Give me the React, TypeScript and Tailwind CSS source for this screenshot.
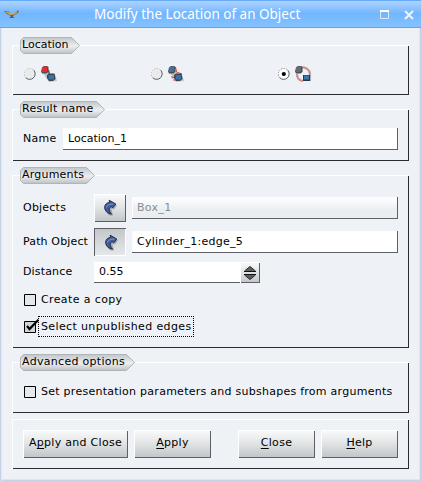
import React from "react";

const raised =
  "shadow-[inset_1px_1px_#ffffff,inset_-1px_-1px_#5c5f63] bg-linear-to-b from-[#fafbfb] via-[#e0e3e4] to-[#bfc4c7]";
const sunken = "shadow-[inset_-1px_-1px_#5c5f63,inset_1px_1px_#fcfdff]";

function Group({
  title,
  tagWidth,
  spacing,
  className,
  children,
}: {
  title?: string;
  tagWidth?: number;
  spacing?: string;
  className: string;
  children: React.ReactNode;
}) {
  return (
    <section
      className={`flex flex-col shadow-[inset_1px_1px_#ffffff,inset_-1px_-1px_#2b2b2f] ${className}`}
    >
      {title && tagWidth && (
        <div className="-mt-2 ml-2 grid h-[17px] shrink-0 justify-start">
          <svg
            className="col-start-1 row-start-1"
            width={tagWidth}
            height="17"
            viewBox={`0 0 ${tagWidth} 17`}
          >
            <defs>
              <linearGradient id="tag" x1="0" y1="0" x2="0" y2="1">
                <stop offset="0" stopColor="#c3c7ca" />
                <stop offset="0.55" stopColor="#eceef0" />
                <stop offset="1" stopColor="#bcc1c4" />
              </linearGradient>
            </defs>
            <path
              d={`M3.5 .5H${tagWidth - 8.5}L${tagWidth - 0.5} 8.5L${tagWidth - 8.5} 16.5H3.5L.5 13.5V3.5Z`}
              fill="url(#tag)"
              stroke="#b0b5b8"
            />
          </svg>
          <span className={`col-start-1 row-start-1 pl-[2px] leading-[15px] ${spacing}`}>
            {title}
          </span>
        </div>
      )}
      {children}
    </section>
  );
}

function Radio({ checked }: { checked?: boolean }) {
  return (
    <svg className="-mt-px" width="12" height="12" viewBox="0 0 12 12">
      <circle cx="5.8" cy="6" r="5.5" fill={checked ? "#ffffff" : "#e9ebec"} stroke="#ffffff" />
      <path d="M1.6 9.6A5.5 5.5 0 0 0 9.7 2.1" fill="none" stroke="#55585b" />
      <path
        d="M1.9 9.9A5.5 5.5 0 1 1 9.7 2.1"
        fill="none"
        stroke={checked ? "#8b8e91" : "#b4b7b9"}
        strokeDasharray="1.5 1"
      />
      {checked && <circle cx="5.8" cy="6" r="2.1" fill="#000" />}
    </svg>
  );
}

function Solid({ color }: { color: string }) {
  return (
    <g>
      <path d="M1 1.5L3 0H6L7.5 1V6L5.5 7.5H1L0 5.5Z" fill="#4b4f53" />
      <path d="M1 2L2.5 .5H6V5L5 6H1Z" fill={color} />
    </g>
  );
}

function MoveIcon({ kind }: { kind: "translate" | "points" | "path" }) {
  return (
    <svg width="17" height="17" viewBox="0 0 17 17">
      {kind === "path" ? (
        <>
          <path
            d="M6 1.5C10 1 14 3 15 7V15M2 8C2 12 4 14.5 8 15"
            fill="none"
            stroke="#b9b3b5"
            strokeWidth="2.2"
          />
          <path
            d="M6 1.5C10 1 14 3 14.5 7V14M2 8C2 12 4 14.5 8 15"
            fill="none"
            stroke="#e08080"
            strokeWidth="1.3"
          />
          <Solid color="#666b70" />
          <path d="M8 9h7v6H8z" fill="#24384c" />
          <path d="M9 9.5h5v4H9z" fill="#3d77ae" />
        </>
      ) : (
        <>
          <path d="M2 7H7L9 3V8H14L16 15L8 16L5 12Z" fill="#c3c5c8" />
          {kind === "points" ? (
            <path d="M7.5 1L8.5 6L14 8M4 10V12L7 11M5 14H8" fill="none" stroke="#e14545" />
          ) : (
            <path d="M7 4L8.5 8" stroke="#6a6563" strokeWidth="1.5" />
          )}
          <Solid color={kind === "translate" ? "#e32c35" : "#3d72a8"} />
          <path d="M6 9L8 7.5H13.5L14.5 13L12 15H8L6 12Z" fill="#3b434a" />
          <path d="M7.5 9h5.5v4.5H7.5z" fill="#3673ae" />
        </>
      )}
    </svg>
  );
}

function Option({
  kind,
  checked,
}: {
  kind: "translate" | "points" | "path";
  checked?: boolean;
}) {
  return (
    <div className="flex w-[127px] items-center gap-[5px]">
      <Radio checked={checked} />
      <MoveIcon kind={kind} />
    </div>
  );
}

function PickButton({ pressed }: { pressed?: boolean }) {
  return (
    <button
      className={`flex h-7 w-8 shrink-0 items-center justify-center ${
        pressed
          ? "bg-linear-to-b from-[#c2c6c9] to-[#e6e9eb] pt-px pl-px shadow-[inset_1px_1px_#5c5f63,inset_-1px_-1px_#ffffff]"
          : raised
      }`}
    >
      <svg width="16" height="18" viewBox="0 0 16 18">
        <path d="M3 9L9 3L15 6.5L12 10.5L9.5 10L11 16.5L7 16.5L3 12Z" fill="#7d8287" opacity=".55" />
        <path
          d="M7.2 1.2L13.8 5L10.6 9L9.6 7.6C7.6 8 6.8 9.5 7.4 11.5C7.8 13 8.6 14 9.6 15.2C6 14.6 2.4 11.6 2.6 8.2C2.8 5.4 4.8 3.6 7.6 3.4Z"
          fill="#405aa5"
          stroke="#20242f"
          strokeWidth=".9"
        />
        <path d="M4.2 8.5C5 6 8 5 11.5 5" fill="none" stroke="#7f98d6" />
      </svg>
    </button>
  );
}

function Check({ checked }: { checked?: boolean }) {
  return (
    <svg className="shrink-0" width="15" height="14" viewBox="0 0 15 14">
      <path d="M.5 2.5h11v11H.5z" fill={checked ? "#d0d4d6" : "#e5e8ea"} stroke="#000" />
      {checked && <path d="M3 7L5.5 10L14.5 .7" fill="none" stroke="#000" strokeWidth="2.2" />}
    </svg>
  );
}

function PushButton({ className, children }: { className: string; children: React.ReactNode }) {
  return (
    <button
      className={`h-7 pb-[2px] text-center leading-[26px] tracking-[0.28px] ${raised} ${className}`}
    >
      {children}
    </button>
  );
}

const underline = "underline decoration-1 underline-offset-2";

export default function App() {
  return (
    <div className="flex h-[481px] w-[421px] flex-col bg-[#eef1f6] font-['DejaVu_Sans',sans-serif] text-[11px] whitespace-nowrap text-black">
      <header className="flex h-7 shrink-0 items-center border-b border-[#5ea4e8] bg-linear-to-b from-[#b2d5ff] via-[#72b6ff] to-[#84c3ff] pr-[7px] pl-1 shadow-[inset_0_1px_#65aafa]">
        <svg width="16" height="10" viewBox="0 0 16 10">
          <path d="M0 2L4 2L7 5L10 4L15 1L14 4L10 6L9 8L11 9H5L7 7L3 5Z" fill="#67604f" />
          <path d="M2 2.5L6 5H9L13 3" fill="none" stroke="#e6b33c" strokeWidth="1.3" />
        </svg>
        <h1 className="flex-1 pl-[74px] font-['Noto_Sans',sans-serif] text-[13.5px] leading-5 text-white">
          Modify the Location of an Object
        </h1>
        <svg className="mt-[2px]" width="34" height="10" viewBox="0 0 34 10">
          <path d="M.5 1V8.5H8.5V1" fill="none" stroke="#dceaf8" />
          <path d="M0 1h9" stroke="#fff" strokeWidth="2" />
          <path d="M25 1L33 9M33 1L25 9" stroke="#eef5fc" strokeWidth="2" />
        </svg>
      </header>
      <main className="flex flex-1 flex-col pt-[17px] pr-3 pl-3 shadow-[inset_1px_0_#c3d2e5,inset_2px_0_#dfe7f1,inset_-1px_-1px_#c3d2e5,inset_-2px_-2px_#dce6f0]">
        <Group title="Location" tagWidth={60} spacing="tracking-normal" className="h-[50px]">
          <div className="mt-[12px] flex h-[17px] pl-[12px]">
            <Option kind="translate" />
            <Option kind="points" />
            <Option kind="path" checked />
          </div>
        </Group>

        <Group title="Result name" tagWidth={85} spacing="tracking-[0.25px]" className="mt-[14px] h-[52px]">
          <div className="mt-[10px] flex h-[22px] pr-[11px] pl-[11px]">
            <label className="w-10 leading-[21px] tracking-[0.25px]">Name</label>
            <div className={`flex-1 bg-white pl-[5px] leading-[21px] ${sunken}`}>Location_1</div>
          </div>
        </Group>

        <Group title="Arguments" tagWidth={75} spacing="tracking-[0.22px]" className="mt-[14px] h-[173px]">
          <div className="mt-[10px] flex h-7 items-center px-[11px]">
            <label className="w-[71px] tracking-[0.22px]">Objects</label>
            <PickButton />
            <div
              className={`ml-[6px] h-[22px] flex-1 bg-linear-to-b from-white to-[#eaeef1] to-60% pl-[5px] leading-[21px] tracking-[0.3px] text-[#8a8d90] ${sunken}`}
            >
              Box_1
            </div>
          </div>
          <div className="mt-[6px] flex h-7 items-center px-[11px]">
            <label className="w-[71px] tracking-[0.14px]">Path Object</label>
            <PickButton pressed />
            <div
              className={`ml-[6px] h-[22px] flex-1 bg-white pl-[5px] leading-[21px] tracking-[0.25px] ${sunken}`}
            >
              Cylinder_1:edge_5
            </div>
          </div>
          <div className="mt-[6px] flex h-[21px] px-[11px]">
            <label className="w-[71px] leading-[19px] tracking-[0.15px]">Distance</label>
            <div className="w-[146px] bg-white pl-[5px] leading-[19px] shadow-[inset_0_-1px_#5c5f63]">
              0.55
            </div>
            <div className={`flex w-5 items-center justify-center ${raised}`}>
              <svg width="12" height="14" viewBox="0 0 12 14">
                <path d="M.5 5.5L6 .5L11.5 5.5ZM.5 8.5L6 13.5L11.5 8.5Z" fill="#5c5f62" />
                <path d="M0 5.5H12M0 8.5H12" stroke="#111" />
                <path d="M.5 5L6 .5L11.5 5M.5 9L6 13.5L11.5 9" fill="none" stroke="#222" />
              </svg>
            </div>
          </div>
          <div className="mt-[7px] flex h-5 items-start pl-[12px]">
            <span className="mt-[2px] flex">
              <Check />
            </span>
            <span className="ml-[2px] leading-[20px] tracking-[0.38px]">Create a copy</span>
          </div>
          <div className="mt-[6px] flex h-[22px] items-start pl-[12px]">
            <span className="z-10 mt-[3px] flex">
              <Check checked />
            </span>
            <span className="-ml-px h-[21px] w-[156px] border border-dotted border-black pl-[2px] leading-[19px] tracking-[0.37px]">
              Select unpublished edges
            </span>
          </div>
        </Group>

        <Group title="Advanced options" tagWidth={115} spacing="tracking-[0.3px]" className="mt-[14px] h-[51px]">
          <div className="mt-[13px] flex h-[14px] items-start pl-[12px]">
            <Check />
            <span className="ml-[2px] leading-[16px] tracking-[0.26px]">
              Set presentation parameters and subshapes from arguments
            </span>
          </div>
        </Group>

        <Group className="mt-[6px] h-[50px]">
          <div className="mt-[11px] flex px-[11px]">
            <PushButton className="w-[105px]">
              A<span className={underline}>p</span>ply and Close
            </PushButton>
            <PushButton className="ml-[6px] w-[77px]">
              <span className={underline}>A</span>pply
            </PushButton>
            <PushButton className="ml-auto w-[77px]">
              <span className={underline}>C</span>lose
            </PushButton>
            <PushButton className="ml-[6px] w-[77px]">
              <span className={underline}>H</span>elp
            </PushButton>
          </div>
        </Group>
      </main>
    </div>
  );
}
